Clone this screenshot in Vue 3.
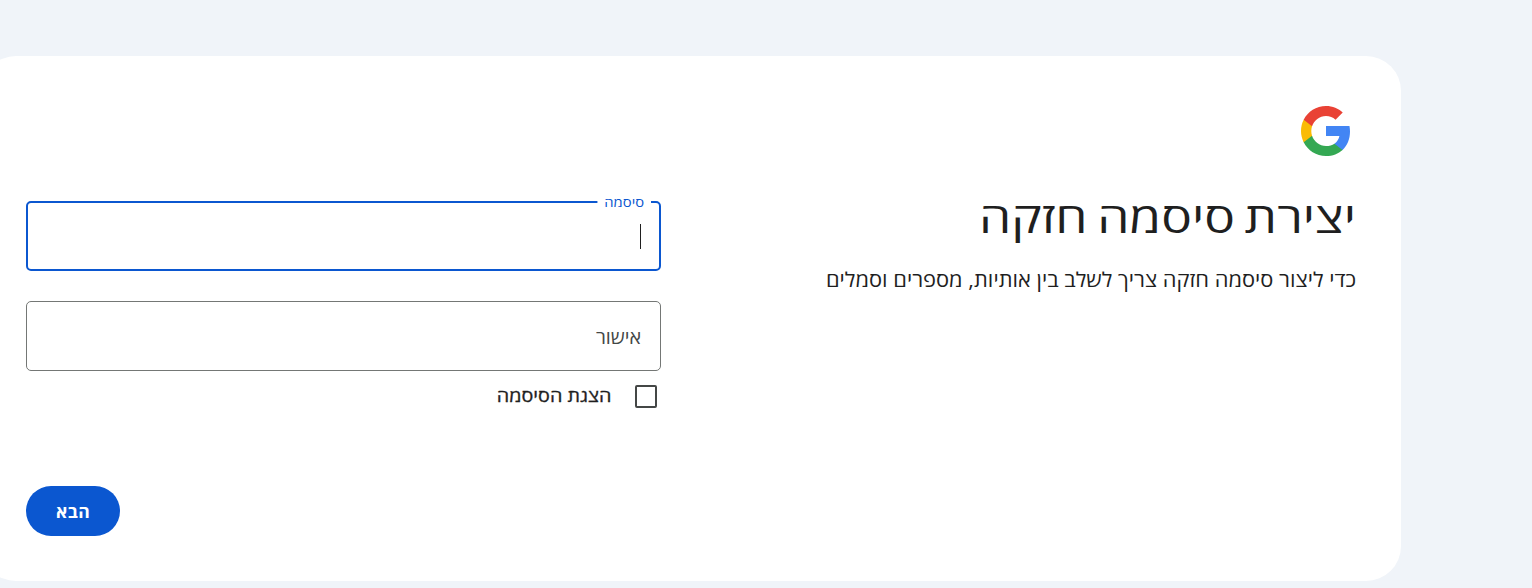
<script setup>
  import { ref } from "vue";
  let showPassword = ref(false);
  let title = `יצירת סיסמה חזקה`;
  let subtitle = `כדי ליצור סיסמה חזקה צריך לשלב בין אותיות, מספרים וסמלים`;
</script>

<template>
  <div class="page" dir="rtl">
    <main class="card">
      <section class="intro">
        <svg class="logo" viewBox="-4 0 48 48">
          <path fill="#4285f4" d="M39.2 24.45c0-1.55-.16-3.04-.43-4.45H20v8h10.73c-.45 2.53-1.86 4.68-4 6.11v5.05h6.5c3.78-3.48 5.97-8.62 5.97-14.71z" />
          <path fill="#34a853" d="M20 44c5.4 0 9.92-1.79 13.24-4.84l-6.5-5.05C24.95 35.3 22.67 36 20 36c-5.19 0-9.59-3.51-11.15-8.23h-6.7v5.2C5.43 39.51 12.18 44 20 44z" />
          <path fill="#fabb05" d="M8.85 27.77c-.4-1.19-.62-2.46-.62-3.77s.22-2.58.62-3.77v-5.2h-6.7C.78 17.73 0 20.77 0 24s.78 6.27 2.14 8.97l6.71-5.2z" />
          <path fill="#e94235" d="M20 12c2.93 0 5.55 1.01 7.62 2.98l5.76-5.76C29.92 5.98 25.39 4 20 4 12.18 4 5.43 8.49 2.14 15.03l6.7 5.2C10.41 15.51 14.81 12 20 12z" />
        </svg>
        <h1>{{ title }}</h1>
        <p class="subtitle">{{ subtitle }}</p>
      </section>

      <section class="form">
        <div class="field focused">
          <span class="floating">סיסמה</span>
          <span class="caret"></span>
        </div>
        <div class="field">
          <span class="placeholder">אישור</span>
        </div>
        <div class="show" @click="showPassword = !showPassword">
          <span class="box" :class="{ checked: showPassword }"></span>
          <span class="show-text">הצגת הסיסמה</span>
        </div>
        <div class="actions">
          <button type="button">הבא</button>
        </div>
      </section>
    </main>
  </div>
</template>

<style>
body{
  margin: 0;
  background-color: #f0f4f9;
  overflow: hidden;
}
</style>

<style scoped>
.page{
  box-sizing: border-box;
  height: 588px;
  padding: 56px 131px 0 0;
  display: flex;
  overflow: hidden;
  background-color: #f0f4f9;
  color: #1f1f1f;
  font-family: "Open Sans", "Noto Sans", sans-serif;
}
.card{
  box-sizing: border-box;
  width: 1420px;
  height: 525px;
  flex: none;
  padding: 45px;
  display: flex;
  gap: 30px;
  border-radius: 35px;
  background-color: #fff;
}
.intro{
  width: 665px;
  flex: none;
}
.logo{
  display: block;
  width: 60px;
  height: 60px;
}
h1{
  margin: 29px 0 0;
  font-size: 41.5px;
  font-weight: 400;
  line-height: 55px;
  word-spacing: -3px;
  white-space: nowrap;
  transform: scaleX(1.236);
  transform-origin: right;
}
.subtitle{
  margin: 20px 0 0;
  font-size: 20px;
  line-height: 30px;
  white-space: nowrap;
  transform: scaleX(1.092);
  transform-origin: right;
}
.form{
  width: 635px;
  flex: none;
  padding-top: 100px;
}
.field{
  box-sizing: border-box;
  position: relative;
  height: 70px;
  margin-bottom: 30px;
  padding: 0 19px;
  display: flex;
  align-items: center;
  border: 1px solid #747775;
  border-radius: 5px;
}
.field.focused{
  padding: 0 18px;
  border: 2px solid #0b57d0;
}
.floating{
  position: absolute;
  top: -11px;
  right: 8px;
  padding: 0 6px;
  background-color: #fff;
  color: #0b57d0;
  font-size: 13px;
  line-height: 20px;
  transform: scaleX(1.14);
  transform-origin: right;
}
.caret{
  width: 1px;
  height: 25px;
  background-color: #1f1f1f;
}
.placeholder{
  padding-top: 2px;
  color: #444746;
  font-size: 18px;
  transform: scaleX(1.1);
  transform-origin: right;
}
.show{
  margin-top: -16px;
  padding-right: 4px;
  display: flex;
  align-items: flex-start;
  gap: 24px;
}
.box{
  box-sizing: border-box;
  width: 22px;
  height: 23px;
  border: 2px solid #444746;
  border-radius: 2px;
}
.box.checked{
  background-color: #0b57d0;
}
.show-text{
  font-size: 17.5px;
  font-weight: 500;
  line-height: 20px;
  -webkit-text-stroke: 0.3px #1f1f1f;
  transform: scaleX(1.13);
  transform-origin: right;
}
.actions{
  margin-top: 78px;
  display: flex;
  justify-content: flex-end;
}
button{
  width: 94px;
  height: 50px;
  padding: 0 0 1px;
  border: none;
  border-radius: 25px;
  background-color: #0b57d0;
  color: #fff;
  font-family: inherit;
  font-size: 17.5px;
  font-weight: 700;
  letter-spacing: 0.4px;
}
</style>
